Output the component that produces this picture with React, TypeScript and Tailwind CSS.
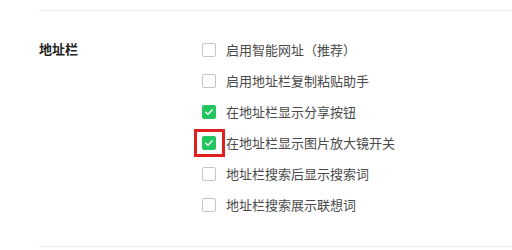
import React from 'react';

const OPTIONS = [
  { label: '启用智能网址（推荐）', checked: false },
  { label: '启用地址栏复制粘贴助手', checked: false },
  { label: '在地址栏显示分享按钮', checked: true },
  { label: '在地址栏显示图片放大镜开关', checked: true, highlight: true },
  { label: '地址栏搜索后显示搜索词', checked: false },
  { label: '地址栏搜索展示联想词', checked: false },
];

function Box({ checked }: { checked: boolean }) {
  if (checked) {
    return (
      <span className="flex h-[14px] w-[14px] items-center justify-center rounded-[2px] bg-[#22c55e]">
        <svg width="10" height="10" viewBox="0 0 10 10" fill="none">
          <path d="M1.8 5.2 L4 7.3 L8.3 2.8" stroke="white" strokeWidth="1.4" strokeLinecap="round" strokeLinejoin="round" />
        </svg>
      </span>
    );
  }
  return <span className="block h-[14px] w-[14px] rounded-[2px] border border-[#c4c4c4] bg-white" />;
}

export default function App() {
  return (
    <div className="h-[250px] w-[512px] overflow-hidden bg-white pt-[10px] pl-[39px] font-['Noto_Sans_CJK_SC',sans-serif]">
      <div className="h-px bg-[#ececec]" />
      <div className="flex pt-[23px]">
        <div className="w-[163px] text-[13px] font-bold leading-[30px] text-[#222]">地址栏</div>
        <div className="flex flex-col">
          {OPTIONS.map((o) => (
            <div key={o.label} className="flex h-[31px] items-center">
              <div className="relative flex items-center">
                <Box checked={o.checked} />
                {o.highlight && (
                  <span className="absolute -left-[8px] -top-[7px] h-[28px] w-[31px] border-[3px] border-[#e02020]" />
                )}
              </div>
              <span className="ml-[10px] text-[13px] text-[#4a4a4a]">{o.label}</span>
            </div>
          ))}
        </div>
      </div>
      <div className="mt-[26px] h-px bg-[#ececec]" />
    </div>
  );
}
